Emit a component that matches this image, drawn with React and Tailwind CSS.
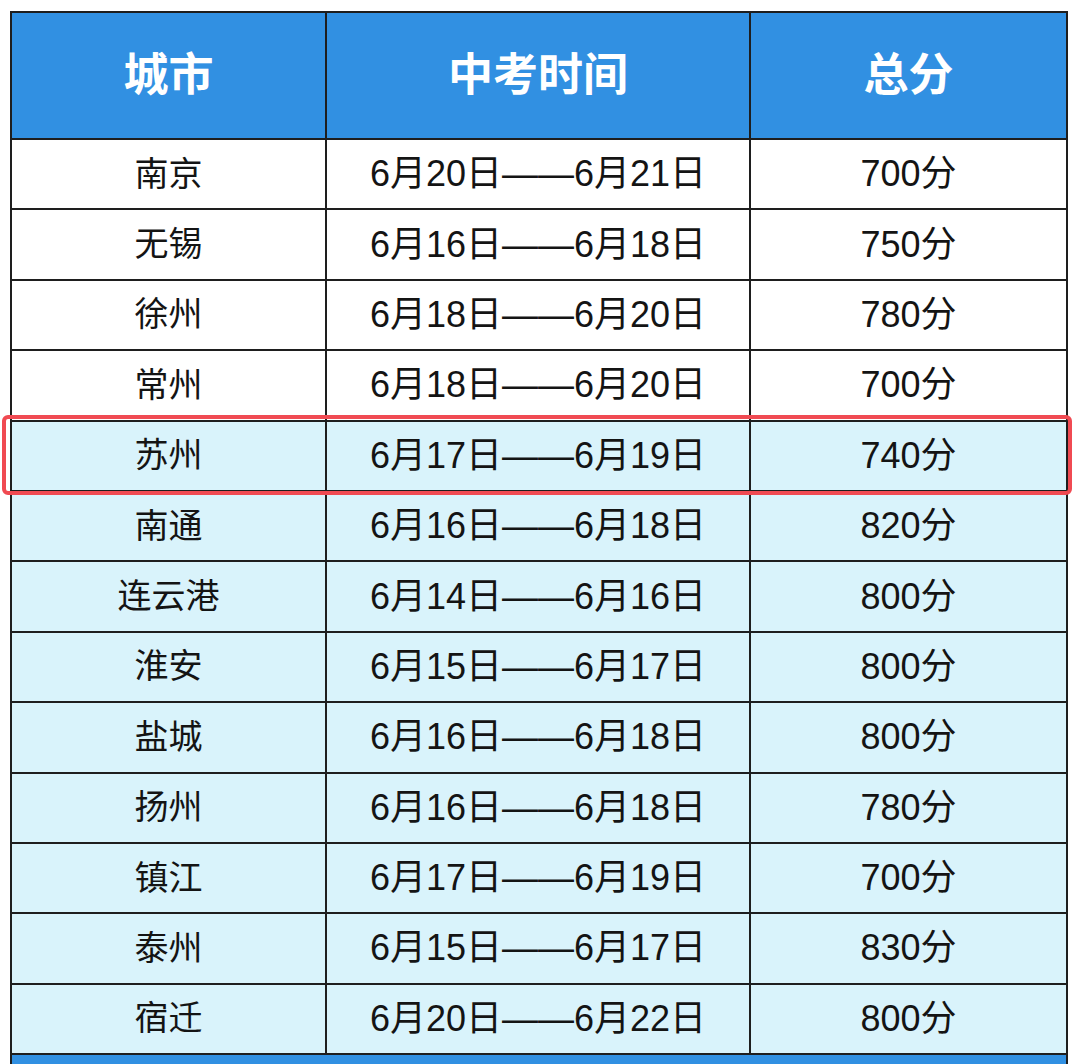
import React from 'react';

const rows = [
  { city: '南京', date: '6月20日——6月21日', score: '700分' },
  { city: '无锡', date: '6月16日——6月18日', score: '750分' },
  { city: '徐州', date: '6月18日——6月20日', score: '780分' },
  { city: '常州', date: '6月18日——6月20日', score: '700分' },
  { city: '苏州', date: '6月17日——6月19日', score: '740分', mark: true },
  { city: '南通', date: '6月16日——6月18日', score: '820分' },
  { city: '连云港', date: '6月14日——6月16日', score: '800分' },
  { city: '淮安', date: '6月15日——6月17日', score: '800分' },
  { city: '盐城', date: '6月16日——6月18日', score: '800分' },
  { city: '扬州', date: '6月16日——6月18日', score: '780分' },
  { city: '镇江', date: '6月17日——6月19日', score: '700分' },
  { city: '泰州', date: '6月15日——6月17日', score: '830分' },
  { city: '宿迁', date: '6月20日——6月22日', score: '800分' },
];

const font = { fontFamily: '"Liberation Sans", "Noto Sans CJK SC", sans-serif' };

export default function App() {
  return (
    <div className="w-[1080px] h-[1064px] overflow-hidden bg-white" style={font}>
      <div className="ml-[10px] mt-[11px] w-[1058px] border-2 border-[#1e1e1e]">
        <div className="grid grid-cols-[315px_424px_315px] h-[127px] border-b-2 border-[#1e1e1e] bg-[#3190e2] text-white text-[45px] font-bold">
          <div className="flex items-center justify-center border-r-2 border-[#1e1e1e]">城市</div>
          <div className="flex items-center justify-center border-r-2 border-[#1e1e1e]">中考时间</div>
          <div className="flex items-center justify-center">总分</div>
        </div>
        {rows.map((r, i) => (
          <div
            key={r.city}
            className={`relative grid grid-cols-[315px_424px_315px] h-[70.4px] border-b-2 border-[#1e1e1e] text-[#141414] ${
              i < 4 ? 'bg-white' : 'bg-[#d9f3fb]'
            }`}
          >
            <div className="flex items-center justify-center border-r-2 border-[#1e1e1e] text-[34px]">{r.city}</div>
            <div className="flex items-center justify-center border-r-2 border-[#1e1e1e] text-[36px]">{r.date}</div>
            <div className="flex items-center justify-center text-[36px]">{r.score}</div>
            {r.mark && (
              <div className="absolute z-10 -left-[10px] -right-[6px] -top-[7px] -bottom-[5px] border-4 border-[#f04a52] rounded-[6px]"></div>
            )}
          </div>
        ))}
        <div className="h-[60px] bg-[#3190e2]"></div>
      </div>
    </div>
  );
}
